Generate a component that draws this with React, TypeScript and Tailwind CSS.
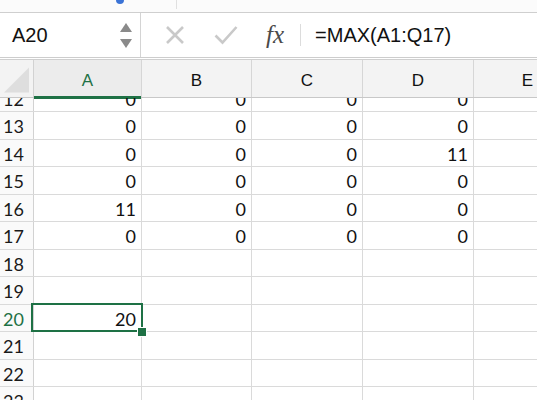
import React from 'react'

const cols = [
  { key: 'A', w: 'w-[108px]' },
  { key: 'B', w: 'w-[110px]' },
  { key: 'C', w: 'w-[111px]' },
  { key: 'D', w: 'w-[111px]' },
]

const data: Record<number, (number | null)[]> = {
  12: [0, 0, 0, 0],
  13: [0, 0, 0, 0],
  14: [0, 0, 0, 11],
  15: [0, 0, 0, 0],
  16: [11, 0, 0, 0],
  17: [0, 0, 0, 0],
  18: [null, null, null, null],
  19: [null, null, null, null],
  20: [20, null, null, null],
  21: [null, null, null, null],
  22: [null, null, null, null],
  23: [null, null, null, null],
}

const cellFont = { fontFamily: 'Lato, "Open Sans", sans-serif' }

function Row({ n }: { n: number }) {
  const active = n === 20
  return (
    <div className={`flex h-[27.5px] shrink-0 border-b border-[#dadada] ${n === 12 ? '-mt-[13.5px]' : ''}`}>
      <div
        className={`w-[34px] shrink-0 border-r border-[#d2d2d2] bg-[#fafafa] pl-[3px] pt-[3px] text-[18px] leading-[22px] ${
          active ? 'text-[#1e7145]' : 'text-[#1a1a1a]'
        }`}
      >
        {n}
      </div>
      {cols.map((c, i) => (
        <div
          key={c.key}
          className={`${c.w} relative shrink-0 border-r border-[#dadada] pr-[5px] pt-[3px] text-right text-[18px] leading-[22px] text-[#111]`}
        >
          {data[n][i]}
          {active && i === 0 && (
            <>
              <div className="pointer-events-none absolute -left-[3px] -right-[2px] -top-[1.5px] -bottom-[1px] z-10 border-2 border-[#1e7145]" />
              <div className="absolute -bottom-[6px] -right-[6px] z-20 h-[10px] w-[10px] border border-white bg-[#1e7145]" />
            </>
          )}
        </div>
      ))}
      <div className="flex-1" />
    </div>
  )
}

export default function App() {
  return (
    <div className="h-[400px] w-[537px] overflow-hidden bg-white" style={{ fontFamily: '"Liberation Sans", Arial, sans-serif' }}>
      {/* top ribbon edge */}
      <div className="flex h-[13px] border-b border-[#cfcfcf] bg-[#fbfbfb]">
        <div className="ml-[116px] h-[4px] w-[8px] rounded-b-full bg-[#3b73d6]" />
        <div className="ml-[52px] h-[9px] border-l border-[#e0e0e0]" />
      </div>

      {/* formula bar */}
      <div className="flex h-[45px] border-b border-[#cdcdcd] bg-white">
        <div className="flex w-[141px] shrink-0 items-center border-r border-[#d4d4d4] pl-[12px] pr-[8px]">
          <span className="flex-1 text-[20px] text-[#111]">A20</span>
          <div className="flex flex-col items-center gap-[7px]">
            <svg width="12" height="9" viewBox="0 0 12 9"><path d="M6 0 L12 9 L0 9 Z" fill="#8a8a8a" /></svg>
            <svg width="12" height="9" viewBox="0 0 12 9"><path d="M0 0 L12 0 L6 9 Z" fill="#8a8a8a" /></svg>
          </div>
        </div>
        <div className="flex items-center">
          <svg className="ml-[24px]" width="20" height="20" viewBox="0 0 20 20">
            <path d="M2 2 L18 18 M18 2 L2 18" stroke="#c9c9c9" strokeWidth="2.6" />
          </svg>
          <svg className="ml-[29px]" width="24" height="20" viewBox="0 0 24 20">
            <path d="M1.5 10.5 L8.5 17.5 L22.5 2" stroke="#c9c9c9" strokeWidth="2.6" fill="none" />
          </svg>
          <span
            className="ml-[28px] text-[25px] italic text-[#4a4a4a]"
            style={{ fontFamily: '"Liberation Serif", "DejaVu Serif", serif' }}
          >
            fx
          </span>
          <div className="ml-[16px] h-[22px] border-l border-[#dcdcdc]" />
          <span className="ml-[14px] text-[20px] text-[#111]">=MAX(A1:Q17)</span>
        </div>
      </div>
      <div className="h-[2px] border-b border-[#cfcfcf] bg-white" />

      {/* column headers */}
      <div className="flex h-[38px] border-b border-[#c8c8c8] bg-[#f3f3f3]">
        <div className="flex w-[34px] shrink-0 items-end justify-end border-r border-[#d2d2d2] p-[4px]">
          <svg width="26" height="26" viewBox="0 0 26 26"><path d="M26 0 L26 26 L0 26 Z" fill="#dedede" /></svg>
        </div>
        {cols.map((c) => (
          <div
            key={c.key}
            className={`${c.w} relative flex shrink-0 items-center justify-center border-r border-[#d6d6d6] pt-[5px] text-[17px] ${
              c.key === 'A' ? 'bg-[#ececec] text-[#1e7145]' : 'text-[#111]'
            }`}
          >
            {c.key}
            {c.key === 'A' && <div className="absolute -bottom-[2px] left-0 right-0 h-[3px] bg-[#1e7145]" />}
          </div>
        ))}
        <div className="flex flex-1 items-center justify-end pr-[4px] pt-[5px] text-[17px] text-[#111]">E</div>
      </div>

      {/* grid */}
      <div className="flex h-[400px] flex-col overflow-hidden" style={cellFont}>
        {[12, 13, 14, 15, 16, 17, 18, 19, 20, 21, 22, 23].map((n) => (
          <Row key={n} n={n} />
        ))}
      </div>
    </div>
  )
}
